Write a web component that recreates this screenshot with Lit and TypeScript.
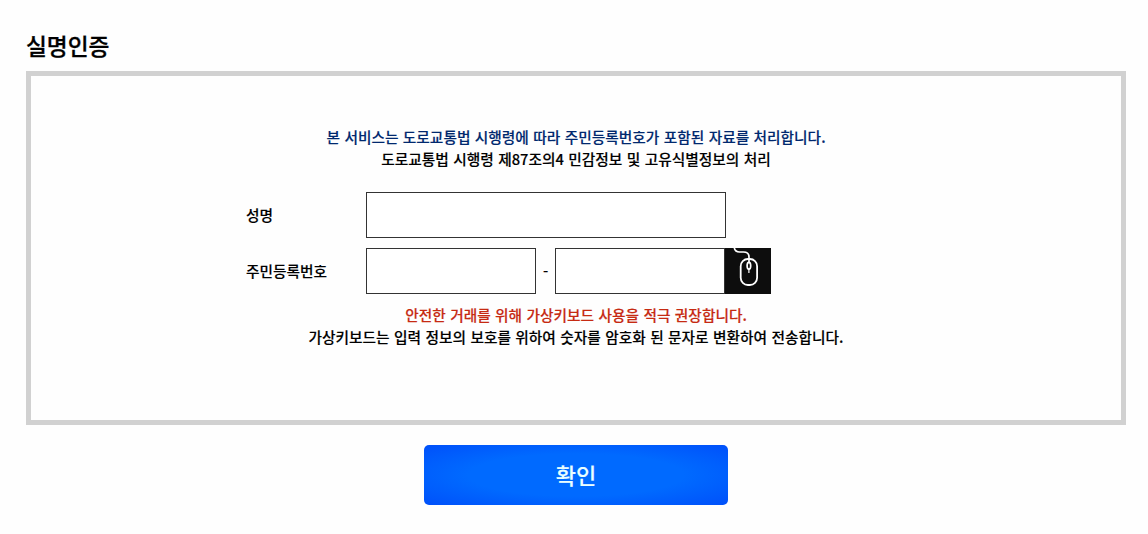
import { html, css, LitElement } from 'lit';
import { customElement } from 'lit/decorators.js';

@customElement('mouse-icon')
export class MouseIcon extends LitElement {
  static styles = css`
    :host {
      display: block;
      width: 46px;
      height: 46px;
    }

    svg {
      display: block;
    }
  `;

  render() {
    return html`<svg width="46" height="46" viewBox="0 0 46 46" fill="none" stroke="#fff">
      <path d="M9.3 0C10 3 11.5 4 14.5 4H18.5C22.5 4 24 6 24 9V15" stroke-width="1.7" />
      <rect x="15.7" y="11" width="16.4" height="26" rx="7.2" stroke-width="1.8" />
      <ellipse cx="23.9" cy="17.8" rx="1.8" ry="3.4" stroke-width="1.7" />
      <path d="M23.9 21V25" stroke-width="1.2" />
    </svg>`;
  }
}

@customElement('auth-form')
export class AuthForm extends LitElement {
  static styles = css`
    :host {
      display: block;
      width: 660px;
      margin-left: 215px;
    }

    .notice {
      margin: 0;
      text-align: center;
      line-height: 22px;
      word-spacing: 1.1px;
    }

    .blue {
      color: #00286e;
    }

    .red {
      color: #c62a12;
    }

    .row {
      display: grid;
      grid-template-columns: 120px auto;
      justify-content: start;
      align-items: center;
      margin-bottom: 10px;
    }

    label {
      padding-bottom: 2px;
    }

    .fields {
      display: flex;
      align-items: center;
    }

    .intro {
      margin-bottom: 22px;
    }

    input {
      box-sizing: border-box;
      width: 170px;
      height: 46px;
      margin: 0;
      padding: 0 12px;
      border: 1px solid #333;
      border-radius: 0;
      background: #fff;
      font: inherit;
      outline: none;
    }

    .name {
      width: 360px;
    }

    .dash {
      width: 19px;
      padding-bottom: 3px;
      text-align: center;
    }

    .keyboard {
      padding: 0;
      border: 0;
      background: #0d0d0d;
    }
  `;

  render() {
    return html`
      <div class="intro">
        <p class="notice blue">본 서비스는 도로교통법 시행령에 따라 주민등록번호가 포함된 자료를 처리합니다.</p>
        <p class="notice">도로교통법 시행령 제87조의4 민감정보 및 고유식별정보의 처리</p>
      </div>
      <div class="row">
        <label for="name">성명</label>
        <input id="name" class="name" type="text" />
      </div>
      <div class="row">
        <label for="front">주민등록번호</label>
        <div class="fields">
          <input id="front" type="text" maxlength="6" />
          <span class="dash">-</span>
          <input type="password" maxlength="7" />
          <button class="keyboard" type="button" aria-label="가상키보드"><mouse-icon></mouse-icon></button>
        </div>
      </div>
      <p class="notice red">안전한 거래를 위해 가상키보드 사용을 적극 권장합니다.</p>
      <p class="notice">가상키보드는 입력 정보의 보호를 위하여 숫자를 암호화 된 문자로 변환하여 전송합니다.</p>
    `;
  }
}

@customElement('app-root')
export class AppRoot extends LitElement {
  static styles = css`
    :host {
      display: block;
      box-sizing: border-box;
      height: 534px;
      padding: 29px 22px 0 26px;
      overflow: hidden;
      background: #fefefe;
      color: #000;
      font-family: 'Noto Sans CJK KR', sans-serif;
      font-size: 14.7px;
      font-weight: 500;
      -webkit-text-stroke: 0.15px currentColor;
    }

    h1 {
      margin: 0;
      height: 42px;
      font-size: 22.7px;
      font-weight: 500;
      line-height: 33px;
      -webkit-text-stroke-width: 0.3px;
    }

    .box {
      box-sizing: border-box;
      height: 354px;
      padding-top: 50px;
      border: 5px solid #d1d1d1;
    }

    .confirm {
      display: block;
      width: 304px;
      height: 60px;
      margin: 20px auto 0;
      padding: 0 0 3px;
      border: 0;
      border-radius: 5px;
      background: radial-gradient(ellipse at center, #006aff 50%, #0050fa 100%);
      color: #eaffff;
      font: inherit;
      font-size: 22px;
    }
  `;

  render() {
    return html`
      <h1>실명인증</h1>
      <div class="box"><auth-form></auth-form></div>
      <button class="confirm" type="button">확인</button>
    `;
  }
}
